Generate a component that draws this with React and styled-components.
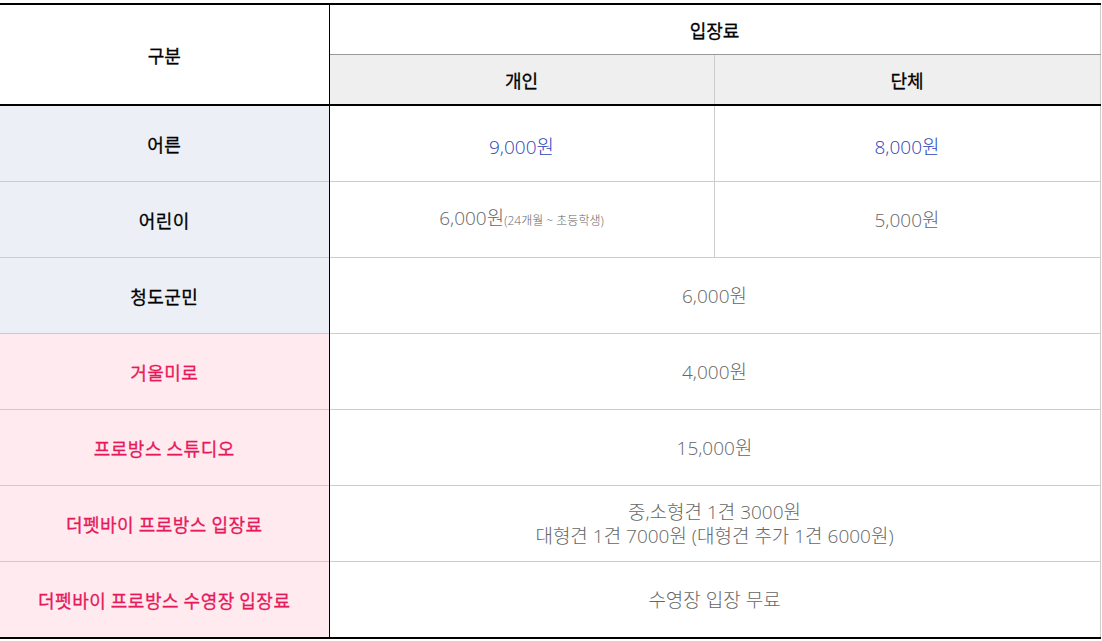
import React from 'react';
import styled, { createGlobalStyle } from 'styled-components';

const GlobalStyle = createGlobalStyle`
  body {
    margin: 0;
    background: #fff;
    font-family: "Noto Sans CJK KR", "Noto Sans", sans-serif;
  }
`;

const Wrap = styled.div`
  padding-top: 3px;
  width: 1100px;
`;

const Table = styled.table`
  width: 1100px;
  border-collapse: collapse;
  table-layout: fixed;
  border-top: 2px solid #000;
  border-bottom: 2px solid #000;
  border-right: 1px solid #ccc;
`;

const HeadCell = styled.th`
  height: ${p => p.$h || 49}px;
  padding: 0;
  font-size: 18px;
  font-weight: 400;
  -webkit-text-stroke: 0.3px #000;
  color: #000;
  text-align: center;
  vertical-align: middle;
  background: ${p => (p.$gray ? '#efefef' : '#fff')};
  border-right: ${p => (p.$divider ? '1px solid #000' : '1px solid #ccc')};
  border-bottom: ${p => (p.$thin ? '1px solid #999' : '2px solid #000')};
`;

const Row = styled.tr`
  & + & > * {
    border-top: 1px solid #ccc;
  }
  &:first-child > td + td {
    padding-top: 6px;
  }
`;

const Label = styled.td`
  height: 75px;
  padding: 0;
  text-align: center;
  vertical-align: middle;
  font-size: 18px;
  font-weight: 400;
  letter-spacing: 0.5px;
  color: ${p => (p.$pink ? '#e8195b' : '#000')};
  -webkit-text-stroke: 0.3px ${p => (p.$pink ? '#e8195b' : '#000')};
  background: ${p => (p.$pink ? '#ffebef' : '#eceff6')};
  border-right: 1px solid #000;
`;

const Value = styled.td`
  padding: 0;
  text-align: center;
  vertical-align: middle;
  font-family: "Open Sans", "Noto Sans CJK KR", sans-serif;
  font-size: 19px;
  font-weight: 300;
  line-height: 24px;
  color: ${p => (p.$blue ? '#2f45b8' : '#666')};
  border-right: 1px solid #ccc;
`;

const Note = styled.span`
  font-size: 12px;
`;

const rows = [
  { label: '어른', cells: [{ text: '9,000원', blue: true }, { text: '8,000원', blue: true }] },
  { label: '어린이', cells: [{ text: '6,000원', note: '(24개월 ~ 초등학생)' }, { text: '5,000원' }] },
  { label: '청도군민', cells: [{ text: '6,000원', span: 2 }] },
  { label: '거울미로', pink: true, cells: [{ text: '4,000원', span: 2 }] },
  { label: '프로방스 스튜디오', pink: true, cells: [{ text: '15,000원', span: 2 }] },
  {
    label: '더펫바이 프로방스 입장료',
    pink: true,
    cells: [{ lines: ['중,소형견 1견 3000원', '대형견 1견 7000원 (대형견 추가 1견 6000원)'], span: 2 }],
  },
  { label: '더펫바이 프로방스 수영장 입장료', pink: true, cells: [{ text: '수영장 입장 무료', span: 2 }] },
];

const App = () => (
  <Wrap>
    <GlobalStyle />
    <Table>
      <colgroup>
        <col style={{ width: 329 }} />
        <col style={{ width: 385 }} />
        <col style={{ width: 386 }} />
      </colgroup>
      <thead>
        <tr>
          <HeadCell rowSpan={2} $divider>구분</HeadCell>
          <HeadCell colSpan={2} $thin>입장료</HeadCell>
        </tr>
        <tr>
          <HeadCell $gray $h={49}>개인</HeadCell>
          <HeadCell $gray $h={49}>단체</HeadCell>
        </tr>
      </thead>
      <tbody>
        {rows.map(row => (
          <Row key={row.label}>
            <Label $pink={row.pink}>{row.label}</Label>
            {row.cells.map((c, i) => (
              <Value key={i} colSpan={c.span || 1} $blue={c.blue}>
                {c.lines ? c.lines.map(l => <div key={l}>{l}</div>) : c.text}
                {c.note && <Note>{c.note}</Note>}
              </Value>
            ))}
          </Row>
        ))}
      </tbody>
    </Table>
  </Wrap>
);

export default App;
